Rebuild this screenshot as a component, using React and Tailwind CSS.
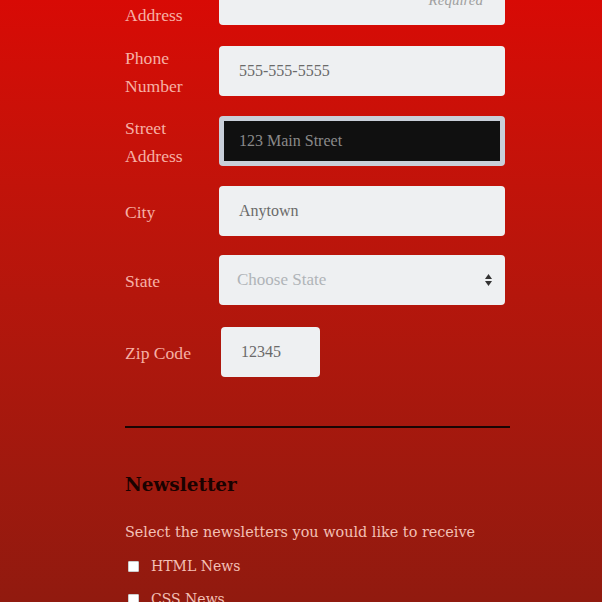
import React from "react";

const labelCls = "w-[94px] shrink-0 text-[17.6px] leading-[28px] text-[#f6b0a5] pt-[2px]";
const inputCls = "w-[286px] h-[50px] rounded-[4px] bg-[#eef0f2] flex items-center px-[20px] text-[16px] text-[#6a6a6a]";
const rowCls = "flex items-center h-[50px]";

export default function App() {
  return (
    <div
      className="w-[602px] h-[602px] overflow-hidden bg-gradient-to-b from-[#d80a05] to-[#911a0f]"
      style={{ fontFamily: '"Liberation Serif", serif' }}
    >
      <div className="ml-[125px] w-[385px] mt-[-25px]">
        {/* Email */}
        <div className={rowCls}>
          <div className={labelCls}>
            <div>Email</div>
            <div>Address</div>
          </div>
          <div className={inputCls + " relative"}>
            <span className="absolute right-[22px] bottom-[14px] italic text-[15px] text-[#a0a0a0]">Required</span>
          </div>
        </div>
        {/* Phone */}
        <div className={rowCls + " mt-[21px]"}>
          <div className={labelCls}>
            <div>Phone</div>
            <div>Number</div>
          </div>
          <div className={inputCls}>555-555-5555</div>
        </div>
        {/* Street */}
        <div className={rowCls + " mt-[20px]"}>
          <div className={labelCls}>
            <div>Street</div>
            <div>Address</div>
          </div>
          <div className="w-[286px] h-[50px] rounded-[4px] bg-[#c9cfd9] p-[5px]">
            <div className="w-full h-full bg-[#101010] flex items-center px-[15px] text-[16px] text-[#8a8a8a]">
              123 Main Street
            </div>
          </div>
        </div>
        {/* City */}
        <div className={rowCls + " mt-[20px]"}>
          <div className={labelCls}>City</div>
          <div className={inputCls}>Anytown</div>
        </div>
        {/* State */}
        <div className={rowCls + " mt-[19px]"}>
          <div className={labelCls}>State</div>
          <div className={inputCls + " justify-between pl-[18px] pr-[12px]"}>
            <span className="text-[17px] text-[#b0b4b8]">Choose State</span>
            <svg width="9" height="16" viewBox="0 0 9 16">
              <path d="M4.5 2 L8 7 L1 7 Z" fill="#333" />
              <path d="M4.5 14 L8 9 L1 9 Z" fill="#333" />
            </svg>
          </div>
        </div>
        {/* Zip */}
        <div className={rowCls + " mt-[22px]"}>
          <div className={labelCls}>Zip Code</div>
          <div className="ml-[2px] w-[99px] h-[50px] rounded-[4px] bg-[#eef0f2] flex items-center px-[20px] text-[16px] text-[#6a6a6a]">
            12345
          </div>
        </div>
        {/* Divider */}
        <div className="mt-[49px] h-[2px] bg-[#1a0503]" />
        {/* Newsletter */}
        <div
          className="mt-[45px] text-[18.4px] font-bold text-[#1a0200] leading-[24px]"
          style={{ fontFamily: '"DejaVu Serif", serif' }}
        >
          Newsletter
        </div>
        <div style={{ fontFamily: '"DejaVu Serif", serif' }} className="text-[#f3c0b6] text-[14.4px] leading-[24px]">
          <div className="mt-[23px]">Select the newsletters you would like to receive</div>
          <div className="mt-[10px] flex items-center gap-[12px] pl-[3px]">
            <span className="w-[11px] h-[11px] bg-white rounded-[1px] border border-[#ccc]" />
            <span className="text-[14px]">HTML News</span>
          </div>
          <div className="mt-[9px] flex items-center gap-[12px] pl-[3px]">
            <span className="w-[11px] h-[11px] bg-white rounded-[1px] border border-[#ccc]" />
            <span className="text-[14px]">CSS News</span>
          </div>
        </div>
      </div>
    </div>
  );
}
